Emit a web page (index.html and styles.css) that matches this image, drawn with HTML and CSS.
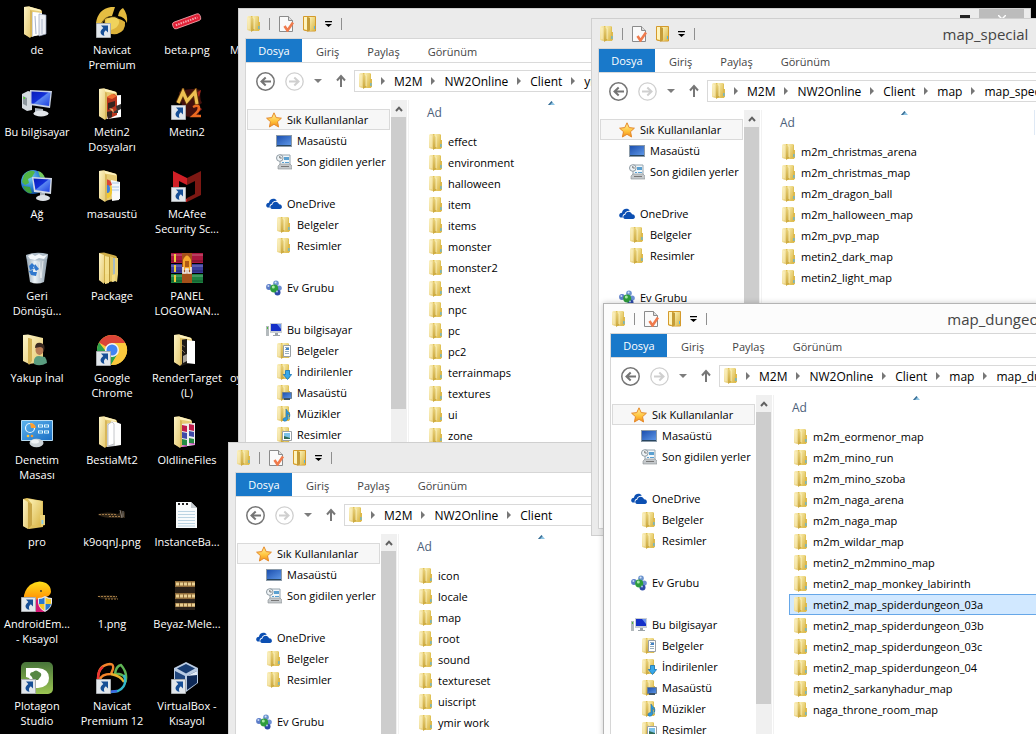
FILE: index.html
```html
<!DOCTYPE html>
<html lang="tr">
<head>
<meta charset="utf-8">
<title>Masaüstü</title>
<link rel="stylesheet" href="styles.css">
</head>
<body>
<svg class="sprites" width="0" height="0" aria-hidden="true">
  <defs>
    <linearGradient id="gold" x1="0" y1="0" x2="1" y2="1"><stop offset="0" stop-color="#fdf3b8"/><stop offset="1" stop-color="#d9b545"/></linearGradient>
    <linearGradient id="goldDark" x1="0" y1="0" x2="0" y2="1"><stop offset="0" stop-color="#e9d27a"/><stop offset="1" stop-color="#c9a53a"/></linearGradient>
    <linearGradient id="cream" x1="0" y1="0" x2="1" y2="1"><stop offset="0" stop-color="#fdf4c6"/><stop offset="1" stop-color="#e6cb75"/></linearGradient>
    <linearGradient id="screen" x1="0" y1="0" x2="1" y2="1"><stop offset="0" stop-color="#0a1cb8"/><stop offset=".45" stop-color="#1230d8"/><stop offset=".5" stop-color="#5a86f0"/><stop offset="1" stop-color="#1a3ce0"/></linearGradient>
    <linearGradient id="desk" x1="0" y1="0" x2="1" y2="1"><stop offset="0" stop-color="#1c4fae"/><stop offset="1" stop-color="#5d96e6"/></linearGradient>
    <linearGradient id="starFill" x1="0" y1="0" x2="0" y2="1"><stop offset="0" stop-color="#fff3a0"/><stop offset=".6" stop-color="#ffc23a"/><stop offset="1" stop-color="#f08a1c"/></linearGradient>
    <linearGradient id="panelBlue" x1="0" y1="0" x2="1" y2="1"><stop offset="0" stop-color="#5db4ee"/><stop offset="1" stop-color="#1a6fc4"/></linearGradient>
    <linearGradient id="bin" x1="0" y1="0" x2="1" y2="0"><stop offset="0" stop-color="#8b9dab"/><stop offset=".4" stop-color="#eef4f8"/><stop offset="1" stop-color="#8798a6"/></linearGradient>
    <linearGradient id="green" x1="0" y1="0" x2="0" y2="1"><stop offset="0" stop-color="#47743a"/><stop offset="1" stop-color="#9cc653"/></linearGradient>
    <linearGradient id="orange" x1="0" y1="0" x2="0" y2="1"><stop offset="0" stop-color="#ffe11a"/><stop offset="1" stop-color="#ff7a00"/></linearGradient>
    <radialGradient id="globe" cx=".35" cy=".3" r=".8"><stop offset="0" stop-color="#7cd0f4"/><stop offset=".6" stop-color="#2277cc"/><stop offset="1" stop-color="#0b3f85"/></radialGradient>
  </defs>

  <symbol id="folder" viewBox="0 0 13 16">
    <path d="M1 0h10l1 1v14H5L1 14z" fill="#e0c257"/>
    <path d="M0 1l1-1h3v15l-4-1z" fill="url(#cream)"/>
    <path d="M4 1l3 1v12l-3 2z" fill="url(#goldDark)"/>
    <path d="M5 0h6v14l-4 1V2z" fill="url(#gold)"/>
    <path d="M6 1v1h1v11M2 2v11" stroke="#fff8cf" stroke-width=".7" fill="none"/>
    <path d="M11 6h2v8l-2 1z" fill="#ddb94c"/><path d="M11.300 10h1.200v3h-1.200z" fill="#57b6e4"/>
  </symbol>
  <symbol id="folder-new" viewBox="0 0 13 16">
    <path d="M.5.5h12v14.500H5l-4.500-1z" fill="#e9c95c" stroke="#d49a2c"/>
    <path d="M1 1h3v13l-3-1z" fill="#fff4be"/><path d="M4 1l3 1v12l-2 1.500H4z" fill="#c59c38"/><path d="M6 1h6v13l-5 1V2z" fill="url(#gold)"/>
    <path d="M11 10h1v3h-1z" fill="#57b6e4"/>
  </symbol>
  <symbol id="props" viewBox="0 0 15 16">
    <path d="M.5.5h9l4 4v11H.5z" fill="#fafafa" stroke="#8b8b8b"/><path d="M9.500.5v4h4" fill="#ddd" stroke="#8b8b8b"/>
    <path d="M5.500 10l3 4.500L14 6.500" fill="none" stroke="#ef7a4c" stroke-width="2.600"/>
  </symbol>
  <symbol id="more" viewBox="0 0 7 6"><path d="M0 0h7v1.300H0z M0 3h7L3.500 6z"/></symbol>
  <symbol id="back" viewBox="0 0 19 19">
    <circle cx="9.500" cy="9.500" r="8.700" fill="#fff" stroke="currentColor" stroke-width="1.500"/>
    <path d="M15 9.500H6M9.700 5.500L5.500 9.500l4.200 4" fill="none" stroke="currentColor" stroke-width="2"/>
  </symbol>
  <symbol id="forward" viewBox="0 0 19 19">
    <circle cx="9.500" cy="9.500" r="8.700" fill="#fff" stroke="currentColor" stroke-width="1.300"/>
    <path d="M4 9.500h9M9.300 5.500l4.200 4-4.200 4" fill="none" stroke="currentColor" stroke-width="2"/>
  </symbol>
  <symbol id="caret" viewBox="0 0 8 4"><path d="M0 0h8L4 4z" fill="#7d7d7d"/></symbol>
  <symbol id="up" viewBox="0 0 18 18"><path d="M9 15V5M5 8.500L9 4l4 4.500" fill="none" stroke="#777" stroke-width="2"/></symbol>
  <symbol id="crumb" viewBox="0 0 4 8"><path d="M0 0l4 4-4 4z" fill="#777"/></symbol>
  <symbol id="sort" viewBox="0 0 7 4"><path d="M0 4l3.500-4L7 4z" fill="#8cc4e4"/><path d="M0 4l3.500-4 1 1.200L2 4z" fill="#3f6f94"/></symbol>
  <symbol id="chev" viewBox="0 0 8 6"><path d="M1 5l3-3.300L7 5" fill="none" stroke="#606060" stroke-width="2"/></symbol>

  <symbol id="star" viewBox="0 0 16 16"><path d="M8 .8l2.200 4.800 5.200.6-3.900 3.500 1.100 5.300L8 12.300 3.400 15l1.100-5.300L.6 6.200l5.200-.6z" fill="url(#starFill)" stroke="#e58a2b" stroke-width="1"/></symbol>
  <symbol id="desktop" viewBox="0 0 16 16"><path d="M0 2h16v12H0z" fill="#8b9aa8"/><path d="M1 3h14v9H1z" fill="url(#desk)"/><path d="M1 12h14v1H1z" fill="#27455f"/></symbol>
  <symbol id="recent" viewBox="0 0 16 16">
    <path d="M4 1h10v10H4z" fill="#f2f7fa" stroke="#96a4ad" stroke-width="1"/><path d="M8 3h5v3H8zM6 8h2v1H6zm3 0h4v1H9z" fill="#5ba0d0"/>
    <path d="M2 12l2-2h10l2 2v3H2z" fill="#c5c9cc" stroke="#888e92" stroke-width=".6"/><path d="M5 12h8v1H5z" fill="#777"/>
    <circle cx="3.800" cy="4" r="3.300" fill="#eef3f6" stroke="#8f9aa2"/><path d="M3.800 2v2h2" fill="none" stroke="#555" stroke-width=".8"/>
  </symbol>
  <symbol id="onedrive" viewBox="0 0 16 16">
    <path d="M1.500 11.500C-1 10 .3 6.800 3 6.700 3.300 2.500 9 1.500 10.800 4.700 8 4.500 6 6 5.600 8 3.500 8.200 3.300 10.500 4 11.500z" fill="#0c4fb2"/>
    <path d="M6 13c-2.500-.4-2.200-4 .3-4.200C6.800 5 12 4.500 13 8.300c3.300-.2 4 4.300 1 4.700z" fill="#0c4fb2"/>
  </symbol>
  <symbol id="homegroup" viewBox="0 0 16 16">
    <circle cx="10" cy="3.300" r="2.800" fill="#6b93cf"/><circle cx="3" cy="7" r="2.900" fill="#5b7cc8"/><circle cx="13.200" cy="8" r="2.600" fill="#6d8fd4"/><circle cx="11.500" cy="12.500" r="3" fill="#2c49a8"/>
    <circle cx="8.200" cy="8.500" r="4" fill="#2d9c3c"/><circle cx="7.300" cy="7" r="1.500" fill="#a9e8a6"/><circle cx="2.400" cy="6" r="1" fill="#c8d8f6"/><circle cx="9.600" cy="2.400" r="1" fill="#d8e6f6"/><circle cx="11" cy="11.500" r="1" fill="#aabef0"/>
  </symbol>
  <symbol id="pc" viewBox="0 0 16 16">
    <path d="M0 4h3v10H0z" fill="#b4babd"/><path d="M1 5h1v2H1z" fill="#4dbb3e"/><path d="M4 1h12v10H4z" fill="#c9ced3"/><path d="M5 2h10v7H5z" fill="#1530c8"/><path d="M11 2h4v5z" fill="#6e95ee"/><path d="M9 11h3v2h2v1H7v-1h2z" fill="#9aa2a8"/>
  </symbol>
  <symbol id="f16" viewBox="0 0 16 16"><use href="#folder" x="1" y="0" width="13" height="16"/></symbol>
  <symbol id="f-docs" viewBox="0 0 16 16"><use href="#folder" x="1" width="13" height="16"/><path d="M7.500 2.500h7v11h-7z" fill="#fff" stroke="#9aa0a4"/><path d="M9 4.500h4M9 6.500h4M9 8.500h4M9 10.500h4" stroke="#96aebf"/><path d="M10 5h3v2h-3z" fill="#4383c6"/></symbol>
  <symbol id="f-down" viewBox="0 0 16 16"><use href="#folder" x="1" width="13" height="16"/><path d="M9.500 6.500h4v4h2.200l-4.200 5-4.200-5h2.200z" fill="#38a8ea" stroke="#1773b8" stroke-width=".8"/></symbol>
  <symbol id="f-desk" viewBox="0 0 16 16"><use href="#folder" x="1" width="13" height="16"/><path d="M6.500 7.500h9v6h-9z" fill="url(#desk)" stroke="#6f7f8e"/><path d="M8 13h6v2H8z" fill="#3b5368"/></symbol>
  <symbol id="f-music" viewBox="0 0 16 16"><use href="#folder" x="1" width="13" height="16"/><path d="M10 3c1 3 5 3 3.500 8 0-2-1-3-2-3.500V13c0 2.500-4.500 3-4.500.7 0-1.700 1.600-2.300 3-2z" fill="#2d9be0" stroke="#1567a6" stroke-width=".5"/></symbol>
  <symbol id="f-pics" viewBox="0 0 16 16"><use href="#folder" x="1" width="13" height="16"/><path d="M6.500 4.500h9v9h-9z" fill="#fff" stroke="#9aa0a4"/><path d="M8 6h6v6H8z" fill="#7cc2ea"/><path d="M8 12V9l3 1 3 1v1z" fill="#2f6b54"/></symbol>

  <symbol id="link" viewBox="0 0 15 15"><path d="M.5.5h14v14H.5z" fill="#dfe3e7" stroke="#a9adb0"/><path d="M1 1h13v13H1z" fill="#e2e7ec"/><path d="M5 2.500h7v7L9.800 7.300C7.800 9 7.500 10.500 8.500 12.800 4 11.800 3 8 7.300 4.900z" fill="#174f96"/></symbol>
  <symbol id="open-back" viewBox="0 0 32 32"><path d="M3 1l5-.5L19 3.500q2 .5 2 2V28L9 31 3 28z" fill="#e6cb75"/></symbol>
  <symbol id="open-front" viewBox="0 0 32 32"><path d="M3 1l5-.5 1 3V32l-6-4z" fill="url(#cream)"/><path d="M8 .5l1 3 11 2V4z" fill="#fdf2bf"/><path d="M9 4l2 1v25l-2 2z" fill="#d8b75a"/></symbol>

  <symbol id="d-de" viewBox="0 0 32 32"><use href="#open-back"/><path d="M9 6l10 1v21l-8 3z" fill="#cfd5df"/><path d="M12 6l9 1v22l-9 1z" fill="#fff"/><path d="M18 8l7 1v19l-7 2z" fill="#eef0f6" stroke="#9aa5ba" stroke-width=".7"/><path d="M14 10l1 18M21 13v15" stroke="#aab4c8"/><use href="#open-front"/></symbol>
  <symbol id="d-pc" viewBox="0 0 32 32"><path d="M1 6l6-3 4 1v18l-5 1-5-3z" fill="#d5dbe0"/><path d="M2 8l4 2v8l-4-2z" fill="#8e989f"/><path d="M2.500 9h1.500v2H2.500z" fill="#53d130"/><path d="M9 2l22 1-2 17-20-3z" fill="#c9d2e4"/><path d="M10.500 3.500l19 1L28 18l-17.500-2.500z" fill="url(#screen)"/><path d="M14 20l8 1v4h-8z" fill="#aeb6be"/><ellipse cx="20" cy="25.500" rx="7.500" ry="3" fill="#e2e6ea"/></symbol>
  <symbol id="d-net" viewBox="0 0 32 32"><circle cx="12" cy="12" r="12" fill="url(#globe)"/><path d="M3 5c4-5 9-5 11-3l-3 5-4 2 1 4-4 2-3-3z" fill="#52b545"/><path d="M2 16l7 1 2 6C6 24 3 20 2 16z" fill="#3f9f3b"/><path d="M17 1c4 1 6 4 7 7l-5-1z" fill="#73c95d"/><path d="M11 7l20 1-1 16-17-2z" fill="#d4dbe8"/><path d="M12.500 8.500l17 1-1 12.500-14-2z" fill="url(#screen)"/><path d="M19 23h5v4h-5z" fill="#abb2ba"/><ellipse cx="22" cy="28" rx="7" ry="3" fill="#dde1e6"/></symbol>
  <symbol id="d-bin" viewBox="0 0 32 32"><path d="M5 3l22-1-4 28q-7 3-14 0z" fill="url(#bin)"/><path d="M5 3q10-4 22-1l-1 5q-10 3-20 0z" fill="#aebcc8"/><path d="M7 4l4-2 3 2 4-2 4 2 4-1-3 4-5-1-4 2-5-1z" fill="#f4f8fb"/><path d="M8 14l3-3 3 3-2 1 1 2-4 1zM14 12l4 5-3 2-2-3zM8 19l4-1v2l4 0-1 4-5-1z" fill="#3178cd"/><path d="M18 10l2 16M22 9l-2 17" stroke="#fff" stroke-opacity=".6"/></symbol>
  <symbol id="d-user" viewBox="0 0 32 32"><path d="M2 1l5-.5L22 4v24l-14 2-6-3z" fill="url(#cream)"/><path d="M8 4l3 1v22l-3 4-1-2V4z" fill="#d3b355"/><path d="M13 30q-1-8 5-8l6 1q2 3 2 6-7 4-13 1z" fill="#5a9d80"/><ellipse cx="18.500" cy="16" rx="4" ry="5" fill="#b77b55"/><path d="M14 14q0-6 6-5 5 1 3 8-1-4-4-4z" fill="#3b2a22"/></symbol>
  <symbol id="d-control" viewBox="0 0 32 32"><path d="M.5 4.500h31v20H.5z" fill="url(#panelBlue)" stroke="#b8dcf2"/><circle cx="9" cy="12" r="4.500" fill="none" stroke="#e4f4ff" stroke-width="1.200"/><path d="M9 7l1 5 5 0q-1-5-6-5z" fill="#ffa030"/><path d="M17 10h5M17 16h5M23 10h5M23 16h5" stroke="#e8f7ff" stroke-width="3"/><path d="M18 10h3M24 10h3M18 16h3M24 16h3" stroke="#45a4dd" stroke-width="1.500"/><circle cx="7" cy="20" r="1.300" fill="#ffc840"/><circle cx="11" cy="20" r="1.300" fill="#f49a30"/><ellipse cx="15.500" cy="27" rx="7" ry="4.200" fill="#cdd3d8"/><ellipse cx="14" cy="25.500" rx="4" ry="2" fill="#f0f3f5"/></symbol>
  <symbol id="d-pro" viewBox="0 0 32 32"><path d="M2 1l4-1 16 3v26L8 31l-6-3z" fill="#e0c15d"/><path d="M2 1l5 3v27l-5-3z" fill="url(#cream)"/><path d="M7 4l4 2v21l-4 4z" fill="#c9a748"/><path d="M7 1l14 2v25l-10-1V6z" fill="url(#gold)"/><path d="M19 17h5v10l-4 1z" fill="#ecd27a"/><path d="M20.500 22h1.800v4h-1.800z" fill="#8bd1ef"/></symbol>
  <symbol id="d-android" viewBox="0 0 32 32"><path d="M3 24Q1 12 9 5q8-6 16-2 5 3 5 9-1 5-7 5l-3 7z" fill="url(#orange)"/><circle cx="20" cy="11" r=".9" fill="#333"/><path d="M14 20q8-3 12 4l1 6-5 2h-9z" fill="#d41673"/><path d="M24 16q3 2 7 2v5q-1 6-7 9-6-3-7-9v-5q4 0 7-2z" fill="#e6eaf0"/><path d="M23.500 17.500V24H18v-5q3 0 5.500-1.500zM24.500 24H30q-1 4.500-5.500 6.500z" fill="#2878cf"/><path d="M24.500 17.500V24H30v-5q-3 0-5.500-1.500zM23.500 24H18q1 4.500 5.500 6.500z" fill="#f5ca2c"/><use href="#link" y="17" width="15" height="15"/></symbol>
  <symbol id="d-plotagon" viewBox="0 0 32 32"><rect width="32" height="32" rx="5" fill="url(#green)"/><path d="M5 6h12q11 1 11 10T17 26H14V19h-4l-2-3-3-1z" fill="#fff"/><path d="M9 13q0-3 3-3 3-3 6 0 3 1 2 4l-3 4h-5q0-3-3-5z" fill="#568744"/><use href="#link" y="17" width="15" height="15"/></symbol>
  <symbol id="d-navicat" viewBox="0 0 32 32"><path d="M0 17Q2 3 15 1l4 0-3 9q-6 0-11 9z" fill="#e5bd42"/><path d="M22 10q1-6 5-8 5 6 4 15-2-6-9-7z" fill="#e3b93d"/><path d="M9 12q12-2 20 4 1 9-8 12-8 1-13-4z" fill="#ddb23a"/><path d="M9 15q3-4 10-4 5 2 4 6-1 5-8 7z" fill="#f0d35d"/><path d="M5 18q4-8 11-7.500 4 0 6 1.500" fill="none" stroke="#4a3a10" stroke-width=".8"/><use href="#link" y="17" width="15" height="15"/></symbol>
  <symbol id="d-metin-files" viewBox="0 0 32 32"><use href="#open-back"/><path d="M11 8l14-1v22l-14 2z" fill="#fff"/><path d="M9 10l9-4 3 2v19l-9 4z" fill="#b8351d"/><path d="M10 9l6-3 5 2-5 3z" fill="#f07030"/><path d="M12 15l7-2v5l-7 4zM10 24l6-1v6l-4 2z" fill="#35251f"/><path d="M20 18l5-2v5l-4 2zM16 25l6-4v4z" fill="#333"/><path d="M13 20l4 1 1 4z" fill="#e3b071"/><use href="#open-front"/></symbol>
  <symbol id="d-masaustu" viewBox="0 0 32 32"><use href="#open-back"/><path d="M15 10l9 2v17l-8 1z" fill="#f3f7fc"/><path d="M16 13h7M16 17h7M16 20h7" stroke="#a8c6e6"/><path d="M9 11q6-1 7 8t-7 10z" fill="#f1c832"/><path d="M9 9q6 0 7 6l-7 2z" fill="#d84436"/><ellipse cx="11.500" cy="19" rx="2.500" ry="4" fill="#3c7ee0"/><path d="M17 23l6-1v8l-7 1z" fill="#fafafa"/><use href="#open-front"/></symbol>
  <symbol id="d-package" viewBox="0 0 32 32"><path d="M3 1l5-.5L19 3.500q2 .5 2 2V28L9 31 3 28z" fill="#cfae48"/><path d="M9 4l4 1v25l-4 2z" fill="#f4e08e"/><path d="M13 5l1-1 3 1v25l-4-1z" fill="#b9983a"/><path d="M14 4l3 1v24l-3 0z" fill="#e3c968"/><path d="M17 6h2v23l-2 1z" fill="#a7bcc4"/><path d="M19 6l3-0v16l-1 8-2-1z" fill="#ead277"/><path d="M3 1l5 2v29l-5-4z" fill="url(#cream)"/><path d="M9 22l4 0v9l-4 1zM16 23l3-1v7l-3 1z" fill="#f3dc85"/></symbol>
  <symbol id="d-chrome" viewBox="0 0 32 32"><circle cx="16" cy="16" r="15" fill="#fbc93d"/><path d="M16 16L3 8.500A15 15 0 0 1 29 8.500z" fill="#db4437"/><path d="M3 8.500A15 15 0 0 0 15 31l6-10-9-1z" fill="#2ba24c"/><path d="M16 9h13.300A15 15 0 0 1 15 31l6.500-11z" fill="#fbc93d"/><circle cx="16" cy="16" r="7" fill="#f4f4f4"/><circle cx="16" cy="16" r="5.500" fill="#4285f4"/><use href="#link" y="17" width="15" height="15"/></symbol>
  <symbol id="d-bestia" viewBox="0 0 32 32"><use href="#open-back"/><path d="M11 8q3-2 6 0l2 22-8 1z" fill="#d3d5d8"/><path d="M15 5l5 1 5 2v21l-6 1z" fill="#fdfdfd"/><path d="M12 9q4-5 6-1v20l-6 2z" fill="#fff" stroke="#b5b8bc" stroke-width=".8"/><use href="#open-front"/></symbol>
  <symbol id="d-k9" viewBox="0 0 32 32"><path d="M2 16q10-3 20 0l4-4 1 4 2-3v7H16q-8 0-14-3z" fill="#2f2517"/><path d="M3 16.500h18M13 18.500h12" stroke="#9a7445" stroke-dasharray="2 1"/><path d="M24 12l2 8M27 13v6" stroke="#8a827a"/></symbol>
  <symbol id="d-one" viewBox="0 0 32 32"><path d="M1 16q10-2 20 0v3H6z" fill="#251c10"/><path d="M2 16.500h19M9 19h13" stroke="#a27a42" stroke-dasharray="2 1"/></symbol>
  <symbol id="d-navicat12" viewBox="0 0 32 32"><g fill="none" stroke-width="2.400"><path d="M2 17Q2 3 14 2q4 0 3 5l-2 5Q5 12 4 18" stroke="#f4852b"/><path d="M2 17Q2 8 7 5" stroke="#ee3434"/><path d="M19 12q1-8 6-9 6 7 5 14-2-4-7-5z" stroke="#5fb455"/><path d="M15 12q10 2 13 8" stroke="#e6b32e"/><path d="M28 13q4 11-6 16l-7 1" stroke="#34b9cd"/><path d="M13 30l8-1" stroke="#3c67e4"/></g><use href="#link" y="17" width="15" height="15"/></symbol>
  <symbol id="d-beta" viewBox="0 0 32 32"><g transform="rotate(-20 15 15)"><rect x="1" y="12" width="29" height="7" rx="2.500" fill="#e01f35" stroke="#f0a5ab" stroke-width=".8"/><path d="M4 15.500h23" stroke="#fff" stroke-opacity=".6" stroke-width="2" stroke-dasharray="1.500 1"/></g></symbol>
  <symbol id="d-metin2" viewBox="0 0 32 32"><path d="M8 4q10-5 22-2-2 8 1 13-5 2-3 12-10 4-15 0z" fill="#44100d"/><path d="M25 5l5-3-2 7zM26 18l5 3-4 4z" fill="#a3271c"/><path d="M7 15L12 4l4 9 8-9 2 13" fill="none" stroke="#5c3008" stroke-width="5"/><path d="M7 15L12 4l4 9 8-9 2 12" fill="none" stroke="#efc052" stroke-width="3.200"/><path d="M22 19q6-3 6 1 0 3-6 8h8" fill="none" stroke="#ec6a20" stroke-width="2.500"/><use href="#link" y="17" width="15" height="15"/></symbol>
  <symbol id="d-mcafee" viewBox="0 0 32 32"><path d="M2 1l14 7v7l-8-4v14l8 4v3L2 26z" fill="#d01f26"/><path d="M30 1l-14 7v7l8-4v13l-8 4v4l14-7z" fill="#7d1813"/><use href="#link" y="17" width="15" height="15"/></symbol>
  <symbol id="d-rar" viewBox="0 0 32 32"><path d="M0 1h32v10H0z" fill="#a9173f"/><path d="M0 12h32v9H0z" fill="#3a3c9c"/><path d="M0 22h32v9H0z" fill="#1c8140"/><path d="M0 3h32M0 14h32M0 24h32" stroke="#fff" stroke-opacity=".35"/><path d="M0 9h32M0 19h32M0 29h32" stroke="#000" stroke-opacity=".35"/><path d="M4 2v8M4 13v7M4 23v7" stroke="#f0cf3d" stroke-width="2"/><path d="M11 1h10v30H11z" fill="#a4501a"/><path d="M12 8q4-9 8 0v10h-8z" fill="#f5a82c"/><path d="M14 9h4v6h-4z" fill="#b05a14"/><path d="M12 15v6h3v-4h2v4h3v-6" fill="none" stroke="#eee" stroke-width="1.600"/></symbol>
  <symbol id="d-render" viewBox="0 0 32 32"><use href="#open-back"/><path d="M15 6l9 1v23l-9-1z" fill="#fff"/><path d="M8 6l8-1v25l-6 2z" fill="#1d1916"/><path d="M12 22l4-2v7l-4 2z" fill="#a9a39a"/><path d="M11 11l3 2M11 16l3 3" stroke="#7a6a58"/><use href="#open-front"/></symbol>
  <symbol id="d-oldline" viewBox="0 0 32 32"><use href="#open-back"/><path d="M9 8l15-1v22l-14 2z" fill="#eee"/><path d="M11 9l5 1v6l-5-1zM18 8l5 1v6l-5-1z" fill="#c01d4b"/><path d="M11 16l5 1v6l-5-1zM18 15l5 1v5l-5-1z" fill="#3f49a8"/><path d="M11 23l5 1v6l-5-1zM18 22l5 1v5l-5-1z" fill="#258a43"/><path d="M10 30l6 0M18 28h6" stroke="#e020c8"/><use href="#open-front"/></symbol>
  <symbol id="d-text" viewBox="0 0 32 32"><path d="M5 4h15l6 6v20H5z" fill="#f8fbfc"/><path d="M20 4v6h6z" fill="#c6ccd0"/><path d="M7 6h2M11 6h2M15 6h2" stroke="#222" stroke-width="2"/><path d="M7 13.500h17M7 16.500h17M7 19.500h17M7 22.500h17M7 25.500h17M7 28h17" stroke="#bcd4e2"/></symbol>
  <symbol id="d-beyaz" viewBox="0 0 32 32"><path d="M4 1h20v29H4z" fill="#2b2118"/><path d="M4 1h20v6H4zM4 13h20v6H4zM4 23h20v4H4z" fill="#8f6c3b"/><path d="M5 4h19M5 16h19M5 25h19" stroke="#e9cf92" stroke-width="3" stroke-dasharray="3 1"/></symbol>
  <symbol id="d-vbox" viewBox="0 0 32 32"><path d="M15 0l12 6v15l-12 9-12-9V6z" fill="#b9cbe2"/><path d="M15 2l9 4.500-9 5-9-5z" fill="#183d72"/><path d="M4 9l10 5v14L4 20z" fill="#20467d"/><path d="M16 14l10-5v12l-10 7z" fill="#0d2855"/><path d="M16 14l10-5v4z" fill="#e3ecf6"/><use href="#link" y="17" width="15" height="15"/></symbol>
</svg>

<main class="desktop">
  <section class="shortcuts" aria-label="Masaüstü simgeleri">
    <button class="shortcut"><svg><use href="#d-de"/></svg><span>de</span></button>
    <button class="shortcut"><svg><use href="#d-pc"/></svg><span>Bu bilgisayar</span></button>
    <button class="shortcut"><svg><use href="#d-net"/></svg><span>Ağ</span></button>
    <button class="shortcut"><svg><use href="#d-bin"/></svg><span>Geri<br>Dönüşü...</span></button>
    <button class="shortcut"><svg><use href="#d-user"/></svg><span>Yakup İnal</span></button>
    <button class="shortcut"><svg><use href="#d-control"/></svg><span>Denetim<br>Masası</span></button>
    <button class="shortcut"><svg><use href="#d-pro"/></svg><span>pro</span></button>
    <button class="shortcut"><svg><use href="#d-android"/></svg><span>AndroidEm...<br>- Kısayol</span></button>
    <button class="shortcut"><svg><use href="#d-plotagon"/></svg><span>Plotagon<br>Studio</span></button>
    <button class="shortcut"><svg><use href="#d-navicat"/></svg><span>Navicat<br>Premium</span></button>
    <button class="shortcut"><svg><use href="#d-metin-files"/></svg><span>Metin2<br>Dosyaları</span></button>
    <button class="shortcut"><svg><use href="#d-masaustu"/></svg><span>masaustü</span></button>
    <button class="shortcut"><svg><use href="#d-package"/></svg><span>Package</span></button>
    <button class="shortcut"><svg><use href="#d-chrome"/></svg><span>Google<br>Chrome</span></button>
    <button class="shortcut"><svg><use href="#d-bestia"/></svg><span>BestiaMt2</span></button>
    <button class="shortcut"><svg><use href="#d-k9"/></svg><span>k9oqnJ.png</span></button>
    <button class="shortcut"><svg><use href="#d-one"/></svg><span>1.png</span></button>
    <button class="shortcut"><svg><use href="#d-navicat12"/></svg><span>Navicat<br>Premium 12</span></button>
    <button class="shortcut"><svg><use href="#d-beta"/></svg><span>beta.png</span></button>
    <button class="shortcut"><svg><use href="#d-metin2"/></svg><span>Metin2</span></button>
    <button class="shortcut"><svg><use href="#d-mcafee"/></svg><span>McAfee<br>Security Sc...</span></button>
    <button class="shortcut"><svg><use href="#d-rar"/></svg><span>PANEL<br>LOGOWAN...</span></button>
    <button class="shortcut"><svg><use href="#d-render"/></svg><span>RenderTarget<br>(L)</span></button>
    <button class="shortcut"><svg><use href="#d-oldline"/></svg><span>OldlineFiles</span></button>
    <button class="shortcut"><svg><use href="#d-text"/></svg><span>InstanceBa...</span></button>
    <button class="shortcut"><svg><use href="#d-beyaz"/></svg><span>Beyaz-Mele...</span></button>
    <button class="shortcut"><svg><use href="#d-vbox"/></svg><span>VirtualBox -<br>Kısayol</span></button>
    <button class="shortcut covered row-1"><svg></svg><span>M</span></button>
    <button class="shortcut covered row-5"><svg></svg><span>oy</span></button>
  </section>

  <section class="window window-ymir" aria-label="ymir work">
    <header class="titlebar">
      <div class="quick"><svg class="folder"><use href="#folder"/></svg><i class="sep"></i><button aria-label="Özellikler"><svg class="props"><use href="#props"/></svg></button><button aria-label="Yeni klasör"><svg class="folder"><use href="#folder-new"/></svg></button><button aria-label="Özelleştir"><svg class="more"><use href="#more"/></svg></button><i class="sep"></i></div>
      <div class="controls"><button class="maximize" aria-label="Ekranı kapla"><i></i></button><button class="close" aria-label="Kapat"><svg viewBox="0 0 8 8"><path d="M0 0l8 8M8 0L0 8" stroke="#fff" stroke-width="1.500"/></svg></button></div>
    </header>
    <div class="client">
      <div class="ribbon"><button class="file-tab">Dosya</button><button>Giriş</button><button>Paylaş</button><button>Görünüm</button></div>
      <div class="toolbar">
        <div class="history"><button class="back" aria-label="Geri"><svg><use href="#back"/></svg></button><button class="forward" aria-label="İleri"><svg><use href="#forward"/></svg></button><button aria-label="Son konumlar"><svg class="caret"><use href="#caret"/></svg></button></div>
        <button class="up" aria-label="Yukarı"><svg><use href="#up"/></svg></button>
        <nav class="address"><svg class="folder"><use href="#folder"/></svg><svg class="crumb"><use href="#crumb"/></svg><a href="#">M2M</a><svg class="crumb"><use href="#crumb"/></svg><a href="#">NW2Online</a><svg class="crumb"><use href="#crumb"/></svg><a href="#">Client</a><svg class="crumb"><use href="#crumb"/></svg><a href="#">ymir work</a></nav>
      </div>
      <div class="panes">
        <nav class="tree">
          <a href="#" class="current"><svg><use href="#star"/></svg>Sık Kullanılanlar</a>
          <a href="#" class="sub"><svg><use href="#desktop"/></svg>Masaüstü</a>
          <a href="#" class="sub"><svg><use href="#recent"/></svg>Son gidilen yerler</a>
          <a href="#" class="group"><svg><use href="#onedrive"/></svg>OneDrive</a>
          <a href="#" class="sub"><svg><use href="#f16"/></svg>Belgeler</a>
          <a href="#" class="sub"><svg><use href="#f16"/></svg>Resimler</a>
          <a href="#" class="group"><svg><use href="#homegroup"/></svg>Ev Grubu</a>
          <a href="#" class="group"><svg><use href="#pc"/></svg>Bu bilgisayar</a>
          <a href="#" class="sub"><svg><use href="#f-docs"/></svg>Belgeler</a>
          <a href="#" class="sub"><svg><use href="#f-down"/></svg>İndirilenler</a>
          <a href="#" class="sub"><svg><use href="#f-desk"/></svg>Masaüstü</a>
          <a href="#" class="sub"><svg><use href="#f-music"/></svg>Müzikler</a>
          <a href="#" class="sub"><svg><use href="#f-pics"/></svg>Resimler</a>
        </nav>
        <div class="scroll"><button aria-label="Yukarı kaydır"><svg><use href="#chev"/></svg></button><i></i></div>
        <div class="files">
          <button class="column">Ad<svg><use href="#sort"/></svg></button>
          <ul>
            <li><svg><use href="#folder"/></svg>effect</li>
            <li><svg><use href="#folder"/></svg>environment</li>
            <li><svg><use href="#folder"/></svg>halloween</li>
            <li><svg><use href="#folder"/></svg>item</li>
            <li><svg><use href="#folder"/></svg>items</li>
            <li><svg><use href="#folder"/></svg>monster</li>
            <li><svg><use href="#folder"/></svg>monster2</li>
            <li><svg><use href="#folder"/></svg>next</li>
            <li><svg><use href="#folder"/></svg>npc</li>
            <li><svg><use href="#folder"/></svg>pc</li>
            <li><svg><use href="#folder"/></svg>pc2</li>
            <li><svg><use href="#folder"/></svg>terrainmaps</li>
            <li><svg><use href="#folder"/></svg>textures</li>
            <li><svg><use href="#folder"/></svg>ui</li>
            <li><svg><use href="#folder"/></svg>zone</li>
          </ul>
        </div>
      </div>
    </div>
  </section>

  <section class="window window-client" aria-label="Client">
    <header class="titlebar">
      <div class="quick"><svg class="folder"><use href="#folder"/></svg><i class="sep"></i><button aria-label="Özellikler"><svg class="props"><use href="#props"/></svg></button><button aria-label="Yeni klasör"><svg class="folder"><use href="#folder-new"/></svg></button><button aria-label="Özelleştir"><svg class="more"><use href="#more"/></svg></button><i class="sep"></i></div>
    </header>
    <div class="client">
      <div class="ribbon"><button class="file-tab">Dosya</button><button>Giriş</button><button>Paylaş</button><button>Görünüm</button></div>
      <div class="toolbar">
        <div class="history"><button class="back" aria-label="Geri"><svg><use href="#back"/></svg></button><button class="forward" aria-label="İleri"><svg><use href="#forward"/></svg></button><button aria-label="Son konumlar"><svg class="caret"><use href="#caret"/></svg></button></div>
        <button class="up" aria-label="Yukarı"><svg><use href="#up"/></svg></button>
        <nav class="address"><svg class="folder"><use href="#folder"/></svg><svg class="crumb"><use href="#crumb"/></svg><a href="#">M2M</a><svg class="crumb"><use href="#crumb"/></svg><a href="#">NW2Online</a><svg class="crumb"><use href="#crumb"/></svg><a href="#">Client</a></nav>
      </div>
      <div class="panes">
        <nav class="tree">
          <a href="#" class="current"><svg><use href="#star"/></svg>Sık Kullanılanlar</a>
          <a href="#" class="sub"><svg><use href="#desktop"/></svg>Masaüstü</a>
          <a href="#" class="sub"><svg><use href="#recent"/></svg>Son gidilen yerler</a>
          <a href="#" class="group"><svg><use href="#onedrive"/></svg>OneDrive</a>
          <a href="#" class="sub"><svg><use href="#f16"/></svg>Belgeler</a>
          <a href="#" class="sub"><svg><use href="#f16"/></svg>Resimler</a>
          <a href="#" class="group"><svg><use href="#homegroup"/></svg>Ev Grubu</a>
        </nav>
        <div class="scroll"><button aria-label="Yukarı kaydır"><svg><use href="#chev"/></svg></button><i></i></div>
        <div class="files">
          <button class="column">Ad<svg><use href="#sort"/></svg></button>
          <ul>
            <li><svg><use href="#folder"/></svg>icon</li>
            <li><svg><use href="#folder"/></svg>locale</li>
            <li><svg><use href="#folder"/></svg>map</li>
            <li><svg><use href="#folder"/></svg>root</li>
            <li><svg><use href="#folder"/></svg>sound</li>
            <li><svg><use href="#folder"/></svg>textureset</li>
            <li><svg><use href="#folder"/></svg>uiscript</li>
            <li><svg><use href="#folder"/></svg>ymir work</li>
          </ul>
        </div>
      </div>
    </div>
  </section>

  <section class="window window-special" aria-label="map_special">
    <header class="titlebar">
      <div class="quick"><svg class="folder"><use href="#folder"/></svg><i class="sep"></i><button aria-label="Özellikler"><svg class="props"><use href="#props"/></svg></button><button aria-label="Yeni klasör"><svg class="folder"><use href="#folder-new"/></svg></button><button aria-label="Özelleştir"><svg class="more"><use href="#more"/></svg></button><i class="sep"></i></div>
      <h2>map_special</h2>
    </header>
    <div class="client">
      <div class="ribbon"><button class="file-tab">Dosya</button><button>Giriş</button><button>Paylaş</button><button>Görünüm</button></div>
      <div class="toolbar">
        <div class="history"><button class="back" aria-label="Geri"><svg><use href="#back"/></svg></button><button class="forward" aria-label="İleri"><svg><use href="#forward"/></svg></button><button aria-label="Son konumlar"><svg class="caret"><use href="#caret"/></svg></button></div>
        <button class="up" aria-label="Yukarı"><svg><use href="#up"/></svg></button>
        <nav class="address"><svg class="folder"><use href="#folder"/></svg><svg class="crumb"><use href="#crumb"/></svg><a href="#">M2M</a><svg class="crumb"><use href="#crumb"/></svg><a href="#">NW2Online</a><svg class="crumb"><use href="#crumb"/></svg><a href="#">Client</a><svg class="crumb"><use href="#crumb"/></svg><a href="#">map</a><svg class="crumb"><use href="#crumb"/></svg><a href="#">map_special</a></nav>
      </div>
      <div class="panes">
        <nav class="tree">
          <a href="#" class="current"><svg><use href="#star"/></svg>Sık Kullanılanlar</a>
          <a href="#" class="sub"><svg><use href="#desktop"/></svg>Masaüstü</a>
          <a href="#" class="sub"><svg><use href="#recent"/></svg>Son gidilen yerler</a>
          <a href="#" class="group"><svg><use href="#onedrive"/></svg>OneDrive</a>
          <a href="#" class="sub"><svg><use href="#f16"/></svg>Belgeler</a>
          <a href="#" class="sub"><svg><use href="#f16"/></svg>Resimler</a>
          <a href="#" class="group"><svg><use href="#homegroup"/></svg>Ev Grubu</a>
        </nav>
        <div class="scroll"><button aria-label="Yukarı kaydır"><svg><use href="#chev"/></svg></button><i></i></div>
        <div class="files">
          <button class="column">Ad<svg><use href="#sort"/></svg></button>
          <ul>
            <li><svg><use href="#folder"/></svg>m2m_christmas_arena</li>
            <li><svg><use href="#folder"/></svg>m2m_christmas_map</li>
            <li><svg><use href="#folder"/></svg>m2m_dragon_ball</li>
            <li><svg><use href="#folder"/></svg>m2m_halloween_map</li>
            <li><svg><use href="#folder"/></svg>m2m_pvp_map</li>
            <li><svg><use href="#folder"/></svg>metin2_dark_map</li>
            <li><svg><use href="#folder"/></svg>metin2_light_map</li>
          </ul>
        </div>
      </div>
    </div>
  </section>

  <section class="window window-dungeon active" aria-label="map_dungeon">
    <header class="titlebar">
      <div class="quick"><svg class="folder"><use href="#folder"/></svg><i class="sep"></i><button aria-label="Özellikler"><svg class="props"><use href="#props"/></svg></button><button aria-label="Yeni klasör"><svg class="folder"><use href="#folder-new"/></svg></button><button aria-label="Özelleştir"><svg class="more"><use href="#more"/></svg></button><i class="sep"></i></div>
      <h2>map_dungeon</h2>
    </header>
    <div class="client">
      <div class="ribbon"><button class="file-tab">Dosya</button><button>Giriş</button><button>Paylaş</button><button>Görünüm</button></div>
      <div class="toolbar">
        <div class="history"><button class="back" aria-label="Geri"><svg><use href="#back"/></svg></button><button class="forward" aria-label="İleri"><svg><use href="#forward"/></svg></button><button aria-label="Son konumlar"><svg class="caret"><use href="#caret"/></svg></button></div>
        <button class="up" aria-label="Yukarı"><svg><use href="#up"/></svg></button>
        <nav class="address"><svg class="folder"><use href="#folder"/></svg><svg class="crumb"><use href="#crumb"/></svg><a href="#">M2M</a><svg class="crumb"><use href="#crumb"/></svg><a href="#">NW2Online</a><svg class="crumb"><use href="#crumb"/></svg><a href="#">Client</a><svg class="crumb"><use href="#crumb"/></svg><a href="#">map</a><svg class="crumb"><use href="#crumb"/></svg><a href="#">map_dungeon</a></nav>
      </div>
      <div class="panes">
        <nav class="tree">
          <a href="#" class="current"><svg><use href="#star"/></svg>Sık Kullanılanlar</a>
          <a href="#" class="sub"><svg><use href="#desktop"/></svg>Masaüstü</a>
          <a href="#" class="sub"><svg><use href="#recent"/></svg>Son gidilen yerler</a>
          <a href="#" class="group"><svg><use href="#onedrive"/></svg>OneDrive</a>
          <a href="#" class="sub"><svg><use href="#f16"/></svg>Belgeler</a>
          <a href="#" class="sub"><svg><use href="#f16"/></svg>Resimler</a>
          <a href="#" class="group"><svg><use href="#homegroup"/></svg>Ev Grubu</a>
          <a href="#" class="group"><svg><use href="#pc"/></svg>Bu bilgisayar</a>
          <a href="#" class="sub"><svg><use href="#f-docs"/></svg>Belgeler</a>
          <a href="#" class="sub"><svg><use href="#f-down"/></svg>İndirilenler</a>
          <a href="#" class="sub"><svg><use href="#f-desk"/></svg>Masaüstü</a>
          <a href="#" class="sub"><svg><use href="#f-music"/></svg>Müzikler</a>
          <a href="#" class="sub"><svg><use href="#f-pics"/></svg>Resimler</a>
        </nav>
        <div class="scroll"><button aria-label="Yukarı kaydır"><svg><use href="#chev"/></svg></button><i></i></div>
        <div class="files">
          <button class="column">Ad<svg><use href="#sort"/></svg></button>
          <ul>
            <li><svg><use href="#folder"/></svg>m2m_eormenor_map</li>
            <li><svg><use href="#folder"/></svg>m2m_mino_run</li>
            <li><svg><use href="#folder"/></svg>m2m_mino_szoba</li>
            <li><svg><use href="#folder"/></svg>m2m_naga_arena</li>
            <li><svg><use href="#folder"/></svg>m2m_naga_map</li>
            <li><svg><use href="#folder"/></svg>m2m_wildar_map</li>
            <li><svg><use href="#folder"/></svg>metin2_m2mmino_map</li>
            <li><svg><use href="#folder"/></svg>metin2_map_monkey_labirinth</li>
            <li class="selected"><svg><use href="#folder"/></svg>metin2_map_spiderdungeon_03a</li>
            <li><svg><use href="#folder"/></svg>metin2_map_spiderdungeon_03b</li>
            <li><svg><use href="#folder"/></svg>metin2_map_spiderdungeon_03c</li>
            <li><svg><use href="#folder"/></svg>metin2_map_spiderdungeon_04</li>
            <li><svg><use href="#folder"/></svg>metin2_sarkanyhadur_map</li>
            <li><svg><use href="#folder"/></svg>naga_throne_room_map</li>
          </ul>
        </div>
      </div>
    </div>
  </section>
</main>
</body>
</html>
```

FILE: styles.css
```css
* { box-sizing: border-box; }

body {
  margin: 0;
  background: #000;
  font: 11px/15px "Open Sans", "Noto Sans", sans-serif;
  color: #000;
}

button {
  margin: 0;
  padding: 0;
  border: 0;
  background: none;
  font: inherit;
  color: inherit;
}

a { color: inherit; text-decoration: none; }
svg { display: block; flex: none; }
.sprites { position: absolute; }

.desktop {
  position: relative;
  height: 100vh;
  overflow: hidden;
}

/* Desktop shortcuts */
.shortcuts {
  display: grid;
  grid-auto-flow: column;
  grid-template-rows: repeat(9, 82px);
  grid-auto-columns: 75px;
  width: max-content;
  padding-top: 6px;
}

.shortcut {
  display: flex;
  flex-direction: column;
  align-items: center;
  gap: 4px;
  padding-right: 1px;
  color: #fff;
  white-space: nowrap;
}

.shortcut svg { width: 32px; height: 32px; }
.shortcut.covered { align-items: flex-start; padding-left: 5px; }
.row-1 { grid-row: 1; grid-column: 4; }
.row-5 { grid-row: 5; grid-column: 4; }

/* Explorer windows */
.window {
  position: absolute;
  display: flex;
  flex-direction: column;
  width: 793px;
  height: 518px;
  padding: 0 6px 6px;
  border: 1px solid #cfcfcf;
  background: #ebebeb;
}

.window-ymir { left: 238px; top: 8px; }
.window-client { left: 228px; top: 442px; }
.window-special { left: 591px; top: 18px; }
.window-dungeon { left: 603px; top: 303px; }

.active {
  border-color: #b4b4b4;
  background: #fcfcfc;
  box-shadow: 0 0 6px rgba(0, 0, 0, .2);
}

.titlebar {
  display: grid;
  grid-template-columns: 1fr auto 1fr;
  align-items: center;
  flex: none;
  height: 29px;
}

.titlebar h2 {
  margin: 0;
  padding-right: 4px;
  font-size: 15px;
  line-height: 20px;
  font-weight: 400;
  color: #444;
}

.quick {
  display: flex;
  align-items: center;
  gap: 9px;
  padding-left: 2px;
}

.sep { width: 1px; height: 12px; background: #8f8f8f; }
.folder { width: 13px; height: 16px; }
.props { width: 15px; height: 16px; }
.more { width: 7px; height: 6px; }

.controls {
  display: flex;
  align-items: center;
  grid-column: 3;
  justify-content: flex-end;
  align-self: start;
  gap: 9px;
}

.maximize i {
  display: block;
  width: 10px;
  height: 9px;
  border: 1px solid #222;
  border-top-width: 3px;
}

.close {
  display: flex;
  align-items: center;
  justify-content: center;
  width: 45px;
  height: 20px;
  background: #bcbcbc;
}

.close svg { width: 8px; height: 8px; }

.client {
  display: flex;
  flex-direction: column;
  flex: 1;
  min-height: 0;
  border: 1px solid #d6d6d6;
  background: #fff;
  overflow: hidden;
}

.ribbon {
  display: flex;
  flex: none;
  height: 24px;
  border-bottom: 1px solid #dadada;
  color: #444;
}

.ribbon button { padding: 2px 14px 0; }

.ribbon .file-tab {
  width: 56px;
  padding: 0;
  background: #1979ca;
  color: #fff;
}

.toolbar {
  display: flex;
  align-items: center;
  flex: none;
  padding: 7px 0 8px 10px;
}

.history { display: flex; align-items: center; gap: 10px; }
.history svg { width: 19px; height: 19px; }
.history .caret { width: 8px; height: 4px; }
.back { color: #757575; }
.forward { color: #cfcfcf; }
.up { margin: 0 4px 0 10px; }
.up svg { width: 18px; height: 18px; }

.address {
  display: flex;
  align-items: center;
  gap: 9px;
  flex: 1;
  height: 22px;
  padding-left: 4px;
  border: 1px solid #d9d9d9;
  font-size: 12px;
  white-space: nowrap;
}

.crumb { width: 4px; height: 8px; }

.panes { display: flex; flex: 1; min-height: 0; }

.tree {
  flex: none;
  width: 145px;
  padding: 9px 1px 0;
  white-space: nowrap;
}

.tree a {
  display: flex;
  align-items: center;
  gap: 5px;
  height: 21px;
  padding-left: 18px;
  border: 1px solid transparent;
}

.tree svg { width: 16px; height: 16px; }
.tree .current { border-color: #dadada; background: #f7f7f7; }
.tree .sub { padding-left: 28px; }
.tree .group { margin-top: 21px; }

.scroll { flex: none; width: 16px; background: #f0f0f0; }

.scroll button {
  display: flex;
  align-items: center;
  justify-content: center;
  width: 15px;
  height: 17px;
}

.scroll svg { width: 8px; height: 6px; }

.scroll i {
  display: block;
  width: 15px;
  height: 292px;
  background: #cdcdcd;
}

.files {
  flex: 1;
  margin-left: 1px;
  border-left: 1px solid #f2f2f2;
}

.column {
  position: relative;
  display: block;
  width: 262px;
  height: 25px;
  margin-left: 11px;
  padding-left: 7px;
  border-right: 1px solid #dfe9f5;
  font-size: 12px;
  text-align: left;
  color: #4c607a;
}

.column svg {
  position: absolute;
  top: 1px;
  left: 50%;
  width: 7px;
  height: 4px;
  margin-left: -3px;
}

.files ul {
  margin: 6px 0 0;
  padding: 0 0 0 15px;
  list-style: none;
}

.files li {
  display: flex;
  align-items: center;
  gap: 6px;
  height: 21px;
  padding-left: 4px;
  border: 1px solid transparent;
}

.files li svg { width: 13px; height: 16px; }
.files .selected { border-color: #66a7e8; background: #d1e8ff; }
```
